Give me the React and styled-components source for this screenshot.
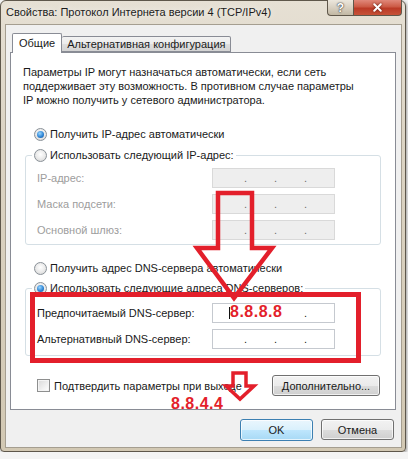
import React from 'react'
import styled, { createGlobalStyle } from 'styled-components';
import { X } from 'lucide-react';

const GlobalStyle = createGlobalStyle`
    html, body {
        margin: 0;
        padding: 0;
        background: #f4f4f4;
    }
    body {
        font-family: "Liberation Sans", Arial, sans-serif;
        font-size: 11px;
        color: #1a1a1a;
    }
`;

const RED = '#e31f2b';

// covered = how many leading dots are hidden under the red note
function IpField({ disabled, covered = 0 }) {
    return (
        <IpBox disabled={disabled}>
            {[0, 1, 2].map(i => (
                <React.Fragment key={i}>
                    <Seg />
                    <Dot $hide={i < covered}>.</Dot>
                </React.Fragment>
            ))}
            <Seg />
        </IpBox>
    );
}

function App() {
    return (
        <>
            <GlobalStyle />
            <Window>
                <TitleBar>
                    <Title>Свойства: Протокол Интернета версии 4 (TCP/IPv4)</Title>
                    <Caption>
                        <HelpBtn>?</HelpBtn>
                        <CloseBtn><X size={13} strokeWidth={3.6} color="#fff" /></CloseBtn>
                    </Caption>
                </TitleBar>

                <Client>
                    <TabBar>
                        <Tab active>Общие</Tab>
                        <Tab>Альтернативная конфигурация</Tab>
                    </TabBar>

                    <Panel>
                        <Intro>
                            Параметры IP могут назначаться автоматически, если сеть<br />
                            поддерживает эту возможность. В противном случае параметры<br />
                            IP можно получить у сетевого администратора.
                        </Intro>

                        <RadioRow $top={19}><Radio checked />Получить IP-адрес автоматически</RadioRow>

                        <Group $top={5} $bottom={4}>
                            <Legend><Radio />Использовать следующий IP-адрес:</Legend>
                            <FieldRow $top={5} disabled><span>IP-адрес:</span><IpField disabled /></FieldRow>
                            <FieldRow disabled><span>Маска подсети:</span><IpField disabled /></FieldRow>
                            <FieldRow disabled><span>Основной шлюз:</span><IpField disabled /></FieldRow>
                        </Group>

                        <RadioRow $top={15}><Radio />Получить адрес DNS-сервера автоматически</RadioRow>

                        <Group $top={4} $bottom={6}>
                            <Legend><Radio checked />Использовать следующие адреса DNS-серверов:</Legend>
                            <FieldRow $top={7}><span>Предпочитаемый DNS-сервер:</span><IpField covered={2} /></FieldRow>
                            <FieldRow><span>Альтернативный DNS-сервер:</span><IpField /></FieldRow>
                        </Group>

                        <BottomRow>
                            <CheckLabel><CheckBox />Подтвердить параметры при выходе</CheckLabel>
                            <Button $w={108}>Дополнительно...</Button>
                        </BottomRow>
                    </Panel>

                    <DialogButtons>
                        <Button $w={73} $primary>OK</Button>
                        <Button $w={73}>Отмена</Button>
                    </DialogButtons>
                </Client>

                <Marks viewBox="0 0 408 459" width="408" height="459">
                    <g fill="none" stroke={RED} strokeLinejoin="miter">
                        <polygon points="218,193 252,193 252,248 272,248 234,298 197,248 218,248" strokeWidth="4.5" />
                        <rect x="32.5" y="294.5" width="326" height="66" strokeWidth="5" />
                        <polygon points="233,373 246,373 246,386 254,386 240,399 226,386 233,386" strokeWidth="3.5" />
                    </g>
                    <line x1="229.5" y1="307" x2="229.5" y2="319" stroke="#111" strokeWidth="1" />
                </Marks>
                <Note $x={230} $y={304}>8.8.8.8</Note>
                <Note $x={171} $y={396}>8.8.4.4</Note>
            </Window>
        </>
    );
}

const Window = styled.div`
    position: relative;
    box-sizing: border-box;
    width: 406px;
    height: 452px;
    display: flex;
    flex-direction: column;
    padding: 0 3px 3px 4px;
    border: 1px solid #5e574b;
    border-radius: 6px 6px 4px 4px;
    background: linear-gradient(180deg, #e6e0d4 0%, #dcd4c4 30%, #d2c8b3 100%);
    box-shadow: 1px 1px 3px rgba(0, 0, 0, .35);
`;

const TitleBar = styled.div`
    display: flex;
    justify-content: space-between;
    align-items: flex-start;
    height: 23px;
`;

const Title = styled.div`
    padding: 3px 0 0 1px;
    line-height: 16px;
    font-size: 11px;
    color: #1c1c1c;
    text-shadow: 0 0 6px rgba(255, 255, 255, .95);
`;

const Caption = styled.div`
    display: flex;
    margin-top: -1px;
`;

const CaptionBtn = styled.div`
    box-sizing: border-box;
    height: 16px;
    display: flex;
    align-items: center;
    justify-content: center;
    border: 1px solid #5f574a;
    border-top: none;
`;

const HelpBtn = styled(CaptionBtn)`
    width: 26px;
    border-right: none;
    border-radius: 0 0 0 4px;
    background: linear-gradient(180deg, #ece7dd 0%, #d8d0c1 50%, #c2b8a4 100%);
    color: #fff;
    font-weight: bold;
    font-size: 12px;
    text-shadow: 0 0 2px #333, 0 0 1px #333;
`;

const CloseBtn = styled(CaptionBtn)`
    width: 49px;
    border-radius: 0 0 4px 0;
    background: linear-gradient(180deg, #e0887a 0%, #cc5a45 45%, #bb3a26 55%, #c65238 100%);
    svg {
        filter: drop-shadow(0 0 1px #5a1a10);
    }
`;

const Client = styled.div`
    flex: 1;
    display: flex;
    flex-direction: column;
    padding: 8px 0 0 4px;
    background: #f0f0f0;
    border: 1px solid #a59e90;
`;

const TabBar = styled.div`
    position: relative;
    z-index: 1;
    display: flex;
    align-items: flex-end;
    height: 19px;
    padding-left: 2px;
`;

const Tab = styled.div`
    box-sizing: border-box;
    display: flex;
    align-items: center;
    height: ${p => p.active ? '20px' : '16px'};
    margin-bottom: ${p => p.active ? '-1px' : '0'};
    padding: ${p => p.active ? '0 6px 1px 6px' : '0 5px'};
    border: 1px solid #898c95;
    border-bottom: ${p => p.active ? 'none' : '1px solid #898c95'};
    border-left: ${p => p.active ? '1px solid #898c95' : 'none'};
    border-radius: 2px 2px 0 0;
    background: ${p => p.active
        ? '#fff'
        : 'linear-gradient(180deg, #f3f3f3 0%, #ebebeb 50%, #dedede 51%, #d3d3d3 100%)'};
    color: #1a1a1a;
    white-space: nowrap;
`;

const Panel = styled.div`
    box-sizing: border-box;
    width: 386px;
    height: 358px;
    padding: 12px 0 0 12px;
    border: 1px solid #898c95;
    background: #fff;
`;

const Intro = styled.p`
    margin: 0;
    line-height: 14px;
    white-space: nowrap;
`;

const RadioRow = styled.div`
    display: flex;
    align-items: center;
    height: 16px;
    margin: ${p => p.$top || 0}px 0 0 11px;
    white-space: nowrap;
`;

const Radio = styled.span`
    position: relative;
    box-sizing: border-box;
    width: 13px;
    height: 13px;
    margin-right: 3px;
    flex: none;
    border: 1px solid #8a9198;
    border-radius: 50%;
    background: radial-gradient(circle at 50% 40%, #ffffff 0%, #e9e9e9 55%, #cfcfcf 100%);

    &::after {
        content: "";
        display: ${p => p.checked ? 'block' : 'none'};
        position: absolute;
        left: 2px;
        top: 2px;
        width: 7px;
        height: 7px;
        border-radius: 50%;
        background: radial-gradient(circle at 40% 35%, #9ad6ff 0%, #2f86d6 55%, #124d92 100%);
    }
`;

const Group = styled.fieldset`
    box-sizing: border-box;
    width: 356px;
    min-width: 0;
    margin: ${p => p.$top}px 0 0 2px;
    padding: 0 0 ${p => p.$bottom}px 6px;
    border: 1px solid #d5dfe5;
    border-radius: 3px;
`;

const Legend = styled.legend`
    display: flex;
    align-items: center;
    height: 16px;
    padding: 0 2px;
    white-space: nowrap;
`;

const FieldRow = styled.div`
    display: grid;
    grid-template-columns: 175px 123px;
    align-items: center;
    height: 20px;
    margin-top: ${p => p.$top != null ? p.$top : 6}px;
    padding-left: 5px;
    color: ${p => p.disabled ? '#9d9d9d' : '#1a1a1a'};
    white-space: nowrap;
`;

const IpBox = styled.div`
    box-sizing: border-box;
    display: flex;
    align-items: center;
    height: 20px;
    padding-left: 3px;
    border: 1px solid ${p => p.disabled ? '#d9d9d9' : '#c5c9cf'};
    background: ${p => p.disabled ? '#eeeeee' : '#fff'};
    color: ${p => p.disabled ? '#6f6f6f' : '#1a1a1a'};
`;

const Seg = styled.span`
    width: 28px;
`;

const Dot = styled.span`
    width: 2px;
    text-align: center;
    line-height: 14px;
    visibility: ${p => p.$hide ? 'hidden' : 'visible'};
`;

const BottomRow = styled.div`
    display: flex;
    justify-content: space-between;
    align-items: center;
    width: 343px;
    margin: 19px 0 0 14px;
`;

const CheckLabel = styled.div`
    display: flex;
    align-items: center;
    white-space: nowrap;
`;

const CheckBox = styled.span`
    box-sizing: border-box;
    width: 13px;
    height: 13px;
    margin-right: 4px;
    border: 1px solid #8e8f8f;
    background: linear-gradient(135deg, #d9d9d9 0%, #f4f4f4 70%, #ffffff 100%);
    box-shadow: inset 0 0 0 1px #f4f4f4;
`;

const Button = styled.div`
    box-sizing: border-box;
    width: ${p => p.$w}px;
    height: ${p => p.$primary ? 22 : 21}px;
    display: flex;
    align-items: center;
    justify-content: center;
    border: 1px solid ${p => p.$primary ? '#3c7fb1' : '#707070'};
    border-radius: 3px;
    background: ${p => p.$primary
        ? 'linear-gradient(180deg, #eaf6fd 0%, #d9f0fc 50%, #bee6fd 51%, #a7d9f5 100%)'
        : 'linear-gradient(180deg, #f2f2f2 0%, #ebebeb 50%, #dddddd 51%, #cfcfcf 100%)'};
    box-shadow: inset 0 0 0 1px rgba(255, 255, 255, .7);
    color: #1a1a1a;
    white-space: nowrap;
`;

const DialogButtons = styled.div`
    display: flex;
    justify-content: flex-end;
    gap: 8px;
    margin-top: 9px;
    padding-right: 7px;
`;

const Marks = styled.svg`
    position: absolute;
    left: -1px;
    top: -1px;
    pointer-events: none;
`;

const Note = styled.span`
    position: absolute;
    left: ${p => p.$x - 1}px;
    top: ${p => p.$y - 1}px;
    font-family: "Liberation Sans", Arial, sans-serif;
    font-weight: bold;
    font-size: 16px;
    line-height: 16px;
    letter-spacing: 0.5px;
    color: ${RED};
`;

export default App;
